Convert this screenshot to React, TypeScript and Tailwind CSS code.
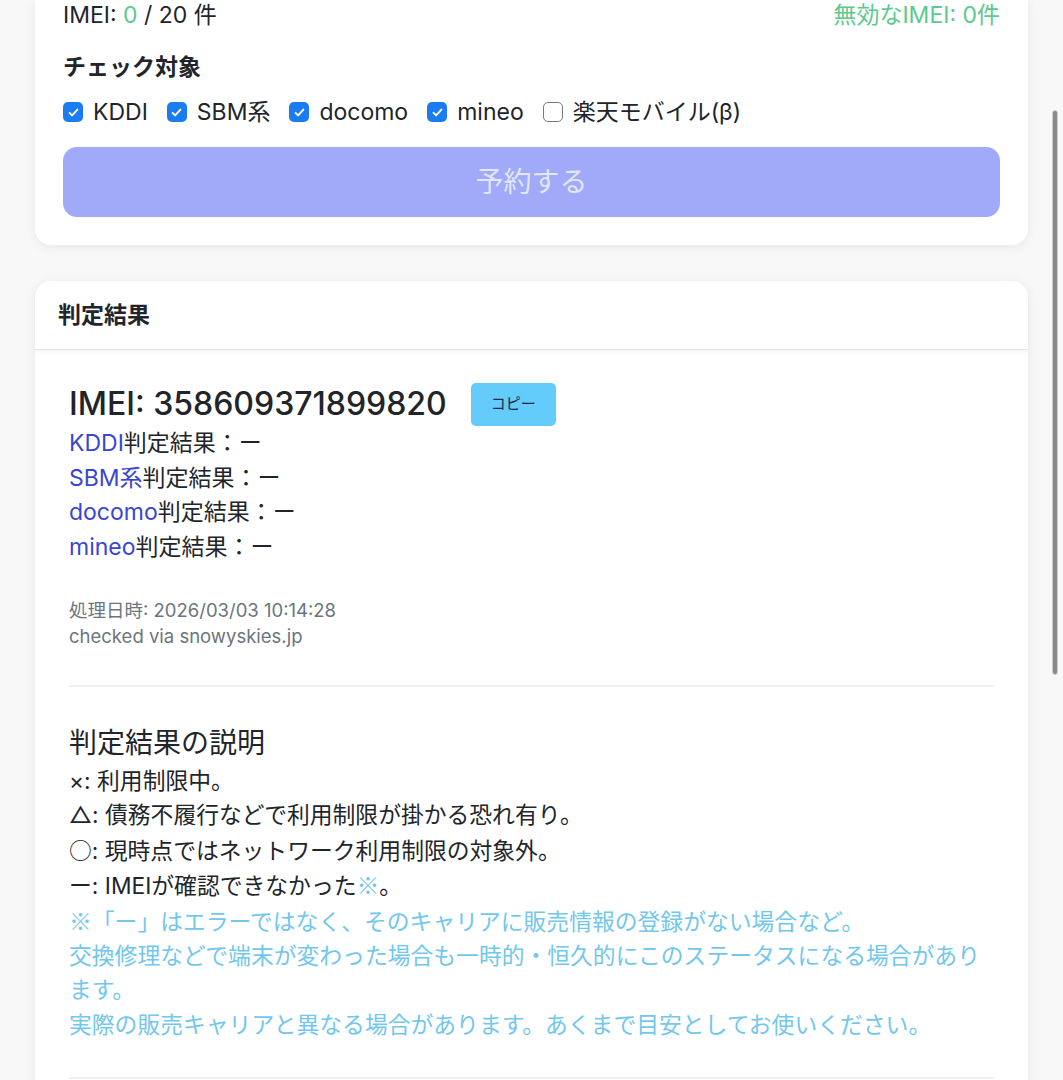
import React from "react";

const carriers = [
  { name: "KDDI", checked: true },
  { name: "SBM系", checked: true },
  { name: "docomo", checked: true },
  { name: "mineo", checked: true },
  { name: "楽天モバイル(β)", checked: false },
];

const resultCarriers = ["KDDI", "SBM系", "docomo", "mineo"];

const cjk = { fontFamily: '"Noto Sans CJK JP", sans-serif' };

function Check({ checked }: { checked: boolean }) {
  if (!checked) {
    return <span className="inline-block w-[20px] h-[20px] rounded-[5px] border-[1.5px] border-[#7a7a7a] bg-white" />;
  }
  return (
    <span className="inline-flex items-center justify-center w-[20px] h-[20px] rounded-[5px] bg-[#1b7cf2]">
      <svg width="13" height="13" viewBox="0 0 16 16" fill="none">
        <path d="M3.2 8.4l3.1 3.1 6.5-7" stroke="white" strokeWidth="2.4" strokeLinecap="round" strokeLinejoin="round" />
      </svg>
    </span>
  );
}

export default function App() {
  return (
    <div
      className="relative min-h-[1080px] bg-[#f8f8f9] px-[35px] pb-10 text-[#212529] text-[23px] overflow-hidden"
      style={{ fontFamily: 'Inter, "Noto Sans CJK JP", sans-serif' }}
    >
      {/* reservation card (top part scrolled off) */}
      <div className="bg-white rounded-b-[16px] shadow-[0_2px_12px_rgba(0,0,0,0.07)] px-[28px] pb-[28px]">
        <div className="flex justify-between items-center h-[30px] leading-[30px]">
          <span>
            IMEI: <span className="text-[#5cc98e]">0</span> / 20 件
          </span>
          <span className="text-[#5cc98e]">無効なIMEI: 0件</span>
        </div>
        <div className="mt-[22px] font-bold leading-[30px]">チェック対象</div>
        <div className="mt-[15px] flex items-center gap-[19px] leading-[30px]">
          {carriers.map((c) => (
            <label key={c.name} className="flex items-center gap-[10px]">
              <Check checked={c.checked} />
              <span>{c.name}</span>
            </label>
          ))}
        </div>
        <button className="mt-[20px] w-full h-[70px] rounded-[14px] bg-[#a0aaf8] text-[#e2e6ff] text-[28px]">
          予約する
        </button>
      </div>

      {/* result card */}
      <div className="mt-[36px] bg-white rounded-t-[16px] shadow-[0_2px_12px_rgba(0,0,0,0.07)]">
        <div className="h-[69px] flex items-center px-[23px] font-semibold border-b border-[#e4e4e4] shadow-[0_2px_3px_rgba(0,0,0,0.04)] rounded-t-[16px]">
          判定結果
        </div>
        <div className="px-[34px] pt-[32px]">
          <div className="flex items-center h-[44px]">
            <span className="text-[32px] font-medium">IMEI: 358609371899820</span>
            <button className="ml-[24px] w-[85px] h-[43px] rounded-[5px] bg-[#63ccfa] text-[15px] text-[#16294a]">
              コピー
            </button>
          </div>
          <div className="leading-[34.5px]">
            {resultCarriers.map((c) => (
              <div key={c}>
                <span className="text-[#3946d3]">{c}</span>判定結果：ー
              </div>
            ))}
          </div>
          <div className="mt-[33px] text-[18.5px] leading-[26px] text-[#6c757d]">
            <div>処理日時: 2026/03/03 10:14:28</div>
            <div>checked via snowyskies.jp</div>
          </div>
          <div className="mt-[36px] border-t-2 border-[#efefef]" />
          <div className="mt-[35px] text-[28px] leading-[42px]">判定結果の説明</div>
          <div className="text-[22.8px] leading-[34.4px]">
            <div>×: 利用制限中。</div>
            <div>△: 債務不履行などで利用制限が掛かる恐れ有り。</div>
            <div>
              <span style={cjk}>○</span>: 現時点ではネットワーク利用制限の対象外。
            </div>
            <div>
              ー: IMEIが確認できなかった<span className="text-[#72c7ec]" style={cjk}>※</span>。
            </div>
            <div className="text-[#72c7ec]" style={cjk}>
              <div>※「ー」はエラーではなく、そのキャリアに販売情報の登録がない場合など。</div>
              <div>交換修理などで端末が変わった場合も一時的・恒久的にこのステータスになる場合があります。</div>
              <div>実際の販売キャリアと異なる場合があります。あくまで目安としてお使いください。</div>
            </div>
          </div>
          <div className="mt-[36px] border-t-2 border-[#efefef]" />
          <div className="h-[200px]" />
        </div>
      </div>

      {/* scroll indicator */}
      <div className="absolute right-[5px] top-[110px] w-[6px] h-[565px] rounded-full bg-[#8a8a8a] border border-[#d0d0d0]" />
    </div>
  );
}
